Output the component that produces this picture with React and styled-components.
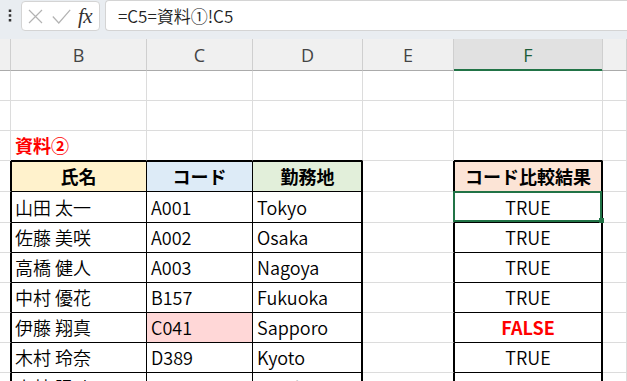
import React from "react";
import styled, { createGlobalStyle, css } from "styled-components";

const Global = createGlobalStyle`
  html, body { margin: 0; padding: 0; background: #fff; }
  body { font-family: "Noto Sans CJK JP", "Noto Sans", sans-serif; }
  * { box-sizing: border-box; }
`;

const GRID = "#dcdcdc";
const INK = "#000";
const GREEN = "#217346";
const COLS = "11px 136px 106px 110px 91px 149px 1fr";

const Screen = styled.div`
  width: 627px;
  height: 381px;
  overflow: hidden;
  background: #fff;
`;

/* ---------- formula bar ---------- */
const FormulaBar = styled.div`
  height: 39px;
  background: #e9edf1;
  display: flex;
  align-items: flex-start;
`;

const Grip = styled.div`
  width: 21px;
  height: 31px;
  display: flex;
  align-items: center;
  justify-content: center;
  padding-right: 2px;
`;

const FxBox = styled.div`
  margin-top: 1px;
  width: 79px;
  height: 30px;
  background: #fff;
  border: 1px solid #d4d4d4;
  border-radius: 4px;
  display: flex;
  align-items: center;
  padding-left: 6px;
  gap: 9px;
`;

const Fx = styled.span`
  font-family: "Liberation Serif", "DejaVu Serif", serif;
  font-style: italic;
  font-weight: 400;
  font-size: 21px;
  color: #333;
  margin-left: -2px;
  line-height: 1;
  letter-spacing: -0.5px;
`;

const FormulaInput = styled.div`
  margin-left: 5px;
  flex: 1;
  height: 31px;
  background: #fff;
  border: 1px solid #d4d4d4;
  border-right: none;
  border-radius: 4px 0 0 4px;
  display: flex;
  align-items: center;
  padding-left: 12px;
  font-size: 17px;
  font-weight: 350;
  color: #222;
`;

/* ---------- sheet ---------- */
const Row = styled.div`
  display: grid;
  grid-template-columns: ${COLS};
  height: ${(p) => p.$h}px;
`;

const HeadCell = styled.div`
  background: ${(p) => (p.$active ? "#e1e1e1" : "#f0f0f0")};
  border-right: 1px solid #cfcfcf;
  border-bottom: 1px solid #ababab;
  display: flex;
  align-items: center;
  justify-content: center;
  font-family: "Open Sans", "Noto Sans", sans-serif;
  font-size: 18px;
  color: ${(p) => (p.$active ? "#1d5e3a" : "#444")};
  ${(p) =>
    p.$active &&
    css`
      border-bottom-color: ${GREEN};
      box-shadow: inset 0 -1px 0 ${GREEN};
    `}
`;

const edgeShadow = (p) => {
  const s = [];
  if (p.$thickLeft) s.push(`inset 1px 0 0 ${INK}`);
  if (p.$thickRight) s.push(`inset -1px 0 0 ${INK}`);
  if (p.$thickTop) s.push(`inset 0 1px 0 ${INK}`);
  return s.length ? `box-shadow: ${s.join(", ")};` : "";
};

const Cell = styled.div`
  position: relative;
  background: ${(p) => p.$bg || "#fff"};
  border-right: 1px solid ${(p) => (p.$inkRight ? INK : GRID)};
  border-bottom: 1px solid ${(p) => (p.$inkBottom ? INK : GRID)};
  ${edgeShadow}
  display: flex;
  align-items: center;
  justify-content: ${(p) => (p.$center ? "center" : "flex-start")};
  padding: ${(p) => (p.$center ? "0" : "0 0 0 4px")};
  padding-top: ${(p) => (p.$thickTop ? "1px" : "0")};
  padding-bottom: 1px;
  font-size: 18px;
  font-weight: ${(p) => (p.$bold ? 700 : 350)};
  color: ${(p) => p.$color || "#000"};
  white-space: nowrap;
`;

const Title = styled.span`
  color: #ff0000;
  font-weight: 700;
  font-size: 18px;
`;

const Selection = styled.div`
  position: absolute;
  top: -1px;
  left: -1px;
  right: 0;
  bottom: 0;
  border: 2px solid ${GREEN};
  z-index: 2;
  pointer-events: none;
`;

const Handle = styled.div`
  position: absolute;
  right: -2px;
  bottom: -1px;
  width: 5px;
  height: 5px;
  background: ${GREEN};
  z-index: 3;
`;

const GripIcon = () => (
  <svg width="4" height="13" viewBox="0 0 4 13">
    <rect x="0.75" y="0.5" width="2.5" height="2.5" fill="#333" />
    <rect x="0.75" y="5.25" width="2.5" height="2.5" fill="#333" />
    <rect x="0.75" y="10" width="2.5" height="2.5" fill="#333" />
  </svg>
);

const CancelIcon = () => (
  <svg width="15" height="15" viewBox="0 0 15 15">
    <path d="M1 1 L14 14 M14 1 L1 14" stroke="#b3b3b3" strokeWidth="1.2" fill="none" />
  </svg>
);

const EnterIcon = () => (
  <svg width="19" height="15" viewBox="0 0 19 15">
    <path d="M0.8 7.5 L6.8 14 L18.2 0.8" stroke="#b3b3b3" strokeWidth="1.2" fill="none" />
  </svg>
);

const people = [
  { name: "山田 太一", code: "A001", city: "Tokyo", ok: true },
  { name: "佐藤 美咲", code: "A002", city: "Osaka", ok: true },
  { name: "高橋 健人", code: "A003", city: "Nagoya", ok: true },
  { name: "中村 優花", code: "B157", city: "Fukuoka", ok: true },
  { name: "伊藤 翔真", code: "C041", city: "Sapporo", ok: false, flag: true },
  { name: "木村 玲奈", code: "D389", city: "Kyoto", ok: true },
  { name: "小林 陽斗", code: "E204", city: "Sendai", ok: true },
];

const rowHeights = [31, 30, 30, 30, 30, 30, 30];

const EmptyRow = ({ h }) => (
  <Row $h={h}>
    <Cell />
    <Cell />
    <Cell />
    <Cell />
    <Cell />
    <Cell />
    <Cell />
  </Row>
);

export default function App() {
  return (
    <Screen>
      <Global />
      <FormulaBar>
        <Grip>
          <GripIcon />
        </Grip>
        <FxBox>
          <CancelIcon />
          <EnterIcon />
          <Fx>fx</Fx>
        </FxBox>
        <FormulaInput>=C5=資料①!C5</FormulaInput>
      </FormulaBar>

      <Row $h={32}>
        <HeadCell />
        <HeadCell>B</HeadCell>
        <HeadCell>C</HeadCell>
        <HeadCell>D</HeadCell>
        <HeadCell>E</HeadCell>
        <HeadCell $active>F</HeadCell>
        <HeadCell />
      </Row>

      <EmptyRow h={30} />
      <EmptyRow h={30} />

      <Row $h={30}>
        <Cell />
        <Cell $inkBottom>
          <Title>資料②</Title>
        </Cell>
        <Cell $inkBottom />
        <Cell $inkBottom />
        <Cell />
        <Cell $inkBottom />
        <Cell />
      </Row>

      <Row $h={31}>
        <Cell $inkRight />
        <Cell $bg="#fff2cc" $center $bold $inkRight $inkBottom $thickLeft $thickTop>
          氏名
        </Cell>
        <Cell $bg="#ddebf7" $center $bold $inkRight $inkBottom $thickTop>
          コード
        </Cell>
        <Cell $bg="#e2efda" $center $bold $inkRight $inkBottom $thickRight $thickTop>
          勤務地
        </Cell>
        <Cell $inkRight />
        <Cell $bg="#fce4d6" $center $bold $inkRight $inkBottom $thickLeft $thickRight $thickTop>
          コード比較結果
        </Cell>
        <Cell />
      </Row>

      {people.map((p, i) => (
        <Row key={p.code} $h={rowHeights[i]}>
          <Cell $inkRight />
          <Cell $inkRight $inkBottom $thickLeft>
            {p.name}
          </Cell>
          <Cell $inkRight $inkBottom $bg={p.flag ? "#ffd7d7" : undefined}>
            {p.code}
          </Cell>
          <Cell $inkRight $inkBottom $thickRight>
            {p.city}
          </Cell>
          <Cell $inkRight />
          <Cell
            $center
            $inkRight
            $inkBottom
            $thickLeft
            $thickRight
            $bold={!p.ok}
            $color={p.ok ? "#000" : "#ff0000"}
          >
            {p.ok ? "TRUE" : "FALSE"}
            {i === 0 && (
              <>
                <Selection />
                <Handle />
              </>
            )}
          </Cell>
          <Cell />
        </Row>
      ))}
    </Screen>
  );
}
